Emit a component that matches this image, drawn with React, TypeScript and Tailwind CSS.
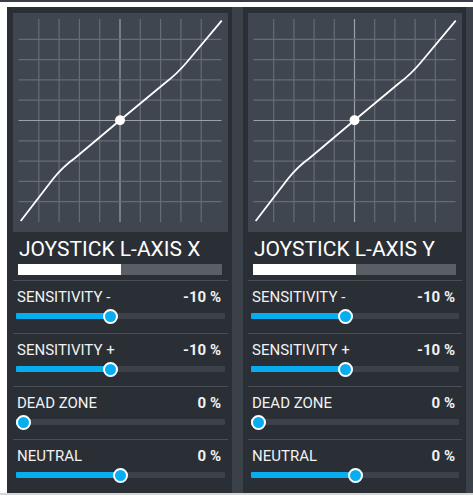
const gridXs = [1, 2, 3, 4, 5, 6, 7, 8, 9].map((i) => 5.5 + i * 20.3);
const gridYs = [1, 2, 3, 4, 5, 6, 7, 8, 9].map((i) => 6 + i * 20.3);

function Graph() {
  return (
    <div className="h-[219px] w-full bg-[#3f4650]">
      <svg viewBox="0 0 215 219" preserveAspectRatio="none" className="block h-full w-full">
        {gridXs.map((x, i) => (
          <line key={'v' + i} x1={x} y1={6} x2={x} y2={209} stroke={i === 4 ? '#9ba1a9' : '#666c75'} strokeWidth={1.2} />
        ))}
        {gridYs.map((y, i) => (
          <line key={'h' + i} x1={5.5} y1={y} x2={208.5} y2={y} stroke={i === 4 ? '#9ba1a9' : '#666c75'} strokeWidth={1.2} />
        ))}
        <path
          d="M7.7 208 L40 166 Q50 153.5 62 145 L107 107.3 L152 70 Q164 61 174 49 L208.7 7.7"
          fill="none"
          stroke="#ffffff"
          strokeWidth={1.8}
          strokeLinejoin="round"
        />
        <circle cx={107} cy={107.3} r={5} fill="#ffffff" />
      </svg>
    </div>
  );
}

function Slider({ pct }: { pct: number }) {
  return (
    <div className="relative mx-[3px] mt-[3px] h-[14px]">
      <div className="absolute left-0 right-0 top-[4px] h-[6px] rounded-[1px] bg-[#3d424a]" />
      <div
        className="absolute left-0 top-[4px] h-[6px] rounded-[1px] bg-[#06aef0]"
        style={{ width: `calc(7px + (100% - 14px) * ${pct})` }}
      />
      <div
        className="absolute top-[-0.5px] h-[15px] w-[15px] rounded-full border-2 border-white bg-[#06aef0]"
        style={{ left: `calc((100% - 14px) * ${pct} - 0.5px)` }}
      />
    </div>
  );
}

const rows = [
  { label: 'SENSITIVITY -', value: '-10 %', pct: 0.45 },
  { label: 'SENSITIVITY +', value: '-10 %', pct: 0.45 },
  { label: 'DEAD ZONE', value: '0 %', pct: 0 },
  { label: 'NEUTRAL', value: '0 %', pct: 0.5 },
];

function Panel({ title, wide }: { title: string; wide: boolean }) {
  return (
    <div
      className={
        wide
          ? 'flex h-full w-[225px] flex-col bg-[#2a2e35] pl-[6px] pr-[4px] pt-[6px]'
          : 'flex h-full w-[223px] flex-col bg-[#2a2e35] pl-[5px] pr-[4px] pt-[6px]'
      }
    >
      <Graph />
      <div className="mt-[5px] h-[24px] pl-[6px] text-[21px] leading-[24px] text-white">{title}</div>
      <div className="ml-[5px] mr-[6px] mt-[3px] flex h-[11px] bg-[#5a5e65]">
        <div className="h-full w-[50.5%] bg-white" />
      </div>
      <div className="mt-[5px] flex flex-col">
        {rows.map((r) => (
          <div key={r.label} className="h-[53px] border-t border-[#4a4f57] pt-[7px]">
            <div className="flex h-[18px] items-center justify-between pl-[4px] pr-[7px] text-[15px] leading-[18px] text-[#f2f2f2]">
              <span>{r.label}</span>
              <span className="font-bold">{r.value}</span>
            </div>
            <Slider pct={r.pct} />
          </div>
        ))}
      </div>
    </div>
  );
}

export default function App() {
  return (
    <div className="h-[500px] w-[473px] overflow-hidden bg-white font-['Roboto',sans-serif]">
      <div className="h-[2px] bg-[#3a3f47]" />
      <div className="ml-[7px] mt-[5px] flex h-[486px] gap-[11px] bg-[#3b4149] pr-[7px]">
        <Panel title="JOYSTICK L-AXIS X" wide />
        <Panel title="JOYSTICK L-AXIS Y" wide={false} />
      </div>
      <div className="h-[2px] bg-[#d6d6d6]" />
    </div>
  );
}
